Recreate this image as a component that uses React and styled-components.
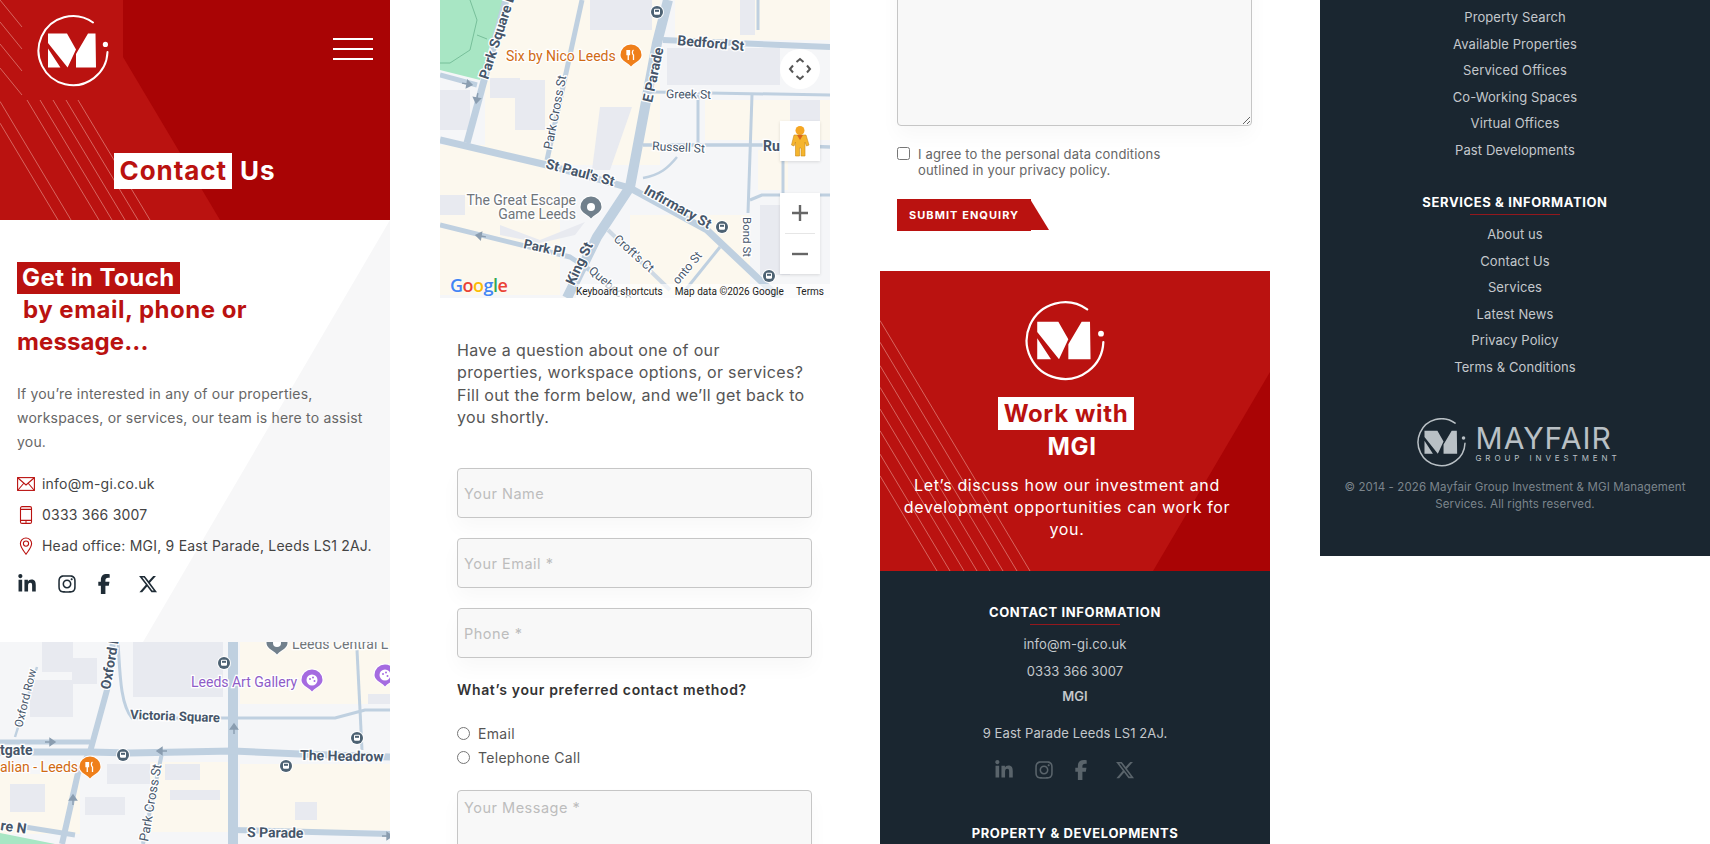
import React from 'react'
import styled, { createGlobalStyle } from 'styled-components'
import { FaLinkedinIn, FaInstagram, FaFacebookF, FaXTwitter } from 'react-icons/fa6'

const RED = '#ba1210'
const DARK_RED = '#a90405'
const NAVY = '#1a2630'

const GlobalStyle = createGlobalStyle`
  html, body {
    margin: 0;
    background: #fff;
    overflow: hidden;
  }
  * {
    box-sizing: border-box;
  }
  body {
    font-family: Inter, "Liberation Sans", sans-serif;
  }
`

const Page = styled.div`
  display: grid;
  grid-template-columns: repeat(4, 390px);
  column-gap: 50px;
  width: 1710px;
  height: 844px;
  overflow: hidden;
`

const Column = styled.div`
  display: flex;
  flex-direction: column;
  height: 844px;
  overflow: hidden;
`

/* red banners */
const Hero = styled.header`
  position: relative;
  height: 220px;
  flex: none;
  background: ${RED};
  overflow: hidden;

  &::before {
    content: '';
    position: absolute;
    inset: 0;
    background: ${DARK_RED};
    clip-path: polygon(123px 0, 390px 0, 390px 220px, 220px 220px, 123px 57px);
  }
`

const HeroRow = styled.div`
  position: relative;
  display: flex;
  justify-content: space-between;
  padding: 15px 17px 0 37px;
`

const Burger = styled.div`
  display: flex;
  flex-direction: column;
  gap: 8px;
  width: 40px;
  margin-top: 23px;

  span {
    display: block;
    height: 2px;
    background: #fff;
  }
`

const HeroTitle = styled.h1`
  position: relative;
  margin: 66px 0 0;
  text-align: center;
  font-size: 26px;
  line-height: 36px;
  font-weight: 700;
  letter-spacing: 0.95px;
  color: #fff;

  mark {
    display: inline-block;
    background: #fff;
    color: ${RED};
    padding: 0 5px;
    margin-right: 8px;
  }
`

const Hatch = styled.svg`
  position: absolute;
  left: 0;
  bottom: 0;
`

/* first column */
const Touch = styled.section`
  position: relative;
  height: 422px;
  flex: none;
  padding: 42px 17px 0;

  &::before {
    content: '';
    position: absolute;
    inset: 0;
    background: #f7f7f8;
    clip-path: polygon(390px 0, 143px 422px, 390px 422px);
  }

  > * {
    position: relative;
  }
`

const TouchTitle = styled.h2`
  margin: 0;
  font-size: 24px;
  line-height: 32px;
  font-weight: 700;
  letter-spacing: 0.5px;
  color: ${RED};

  mark {
    display: inline-block;
    background: ${RED};
    color: #fff;
    padding: 0 5px;
  }

  span {
    display: block;
    padding-left: 6px;
  }

  em {
    display: block;
    font-style: normal;
    letter-spacing: 0.1px;
  }
`

const Lead = styled.p`
  margin: 24px 0 0;
  font-size: 14px;
  line-height: 24px;
  letter-spacing: 0.2px;
  color: #666;
`

const ContactList = styled.ul`
  list-style: none;
  margin: 14px 0 0;
  padding: 0;
`

const ContactItem = styled.li`
  display: flex;
  align-items: center;
  gap: 7px;
  height: 31px;
  font-size: 14px;
  letter-spacing: 0.22px;
  color: #444;
  white-space: nowrap;

  svg {
    flex: none;
    width: 18px;
    height: 18px;
    color: ${RED};
  }
`

const Socials = styled.div`
  display: flex;
  justify-content: ${p => (p.$center ? 'center' : 'flex-start')};
  margin-top: ${p => (p.$center ? '-3px' : '10px')};
  padding-right: ${p => (p.$center ? '22px' : '0')};
  color: ${p => (p.$center ? '#5a646b' : '#1f2c36')};
  height: 26px;
  align-items: center;
  font-size: 20px;

  svg {
    display: block;
  }

  a:nth-child(1) { width: 40px; }
  a:nth-child(2) { width: 37px; }
  a:nth-child(3) { width: 44px; }
  a:nth-child(4) { width: 20px; }
`

/* map */
const MapBox = styled.div`
  position: relative;
  width: 390px;
  height: ${p => p.$height}px;
  flex: none;
  overflow: hidden;
  background: #f5f6f8;

  svg.map {
    display: block;
  }
`

const MapRound = styled.div`
  position: absolute;
  left: 340px;
  top: 49px;
  width: 40px;
  height: 40px;
  border-radius: 50%;
  background: #fff;
  display: grid;
  place-items: center;
`

const MapButton = styled.div`
  position: absolute;
  left: 340px;
  top: ${p => p.$top}px;
  width: 40px;
  height: ${p => p.$height}px;
  background: #fff;
  box-shadow: 0 1px 3px rgba(0, 0, 0, 0.12);
  display: flex;
  flex-direction: column;
  align-items: center;
  justify-content: center;
`

const ZoomRule = styled.div`
  width: 30px;
  height: 1px;
  margin: 11px 0;
  background: #e6e6e6;
`

const GoogleMark = styled.div`
  position: absolute;
  left: 10px;
  bottom: 2px;
  font-family: "Open Sans", Roboto, sans-serif;
  font-size: 18px;
  font-weight: 600;
  line-height: 22px;
  letter-spacing: -0.5px;
  text-shadow: 0 0 2px #fff;
`

const Letter = styled.span`
  color: ${p => p.$color};
`

const Attribution = styled.div`
  position: absolute;
  right: 0;
  bottom: 0;
  width: 254px;
  height: 14px;
  display: flex;
  justify-content: space-between;
  padding: 1px 6px 0 0;
  background: rgba(255, 255, 255, 0.65);
  font-family: Roboto, sans-serif;
  font-size: 10px;
  line-height: 14px;
  color: #222;
  white-space: nowrap;
`

/* form */
const Intro = styled.p`
  margin: 41px 0 0 17px;
  font-size: 16px;
  line-height: 22.3px;
  letter-spacing: 0.34px;
  color: #555;
  white-space: nowrap;
`

const Form = styled.form`
  display: flex;
  flex-direction: column;
  padding: 0 17px;
  margin-top: ${p => p.$top || 0}px;
`

const Field = styled.input`
  display: block;
  width: 355px;
  height: 50px;
  margin-bottom: 20px;
  padding: 0 6px;
  background: #f8f8f8;
  border: 1px solid #c6c6c6;
  border-radius: 4px;
  box-shadow: 0 10px 20px rgba(0, 0, 0, 0.03);
  font: inherit;
  font-size: 14.5px;
  letter-spacing: 0.5px;

  &::placeholder {
    color: #bdbdbd;
    opacity: 1;
  }
`

const Area = styled.textarea`
  display: block;
  width: 355px;
  height: 200px;
  margin-top: ${p => p.$shift || 0}px;
  padding: 8px 6px;
  background: #f8f8f8;
  border: 1px solid #c6c6c6;
  border-radius: 4px;
  box-shadow: 0 10px 20px rgba(0, 0, 0, 0.03);
  font: inherit;
  font-size: 14.5px;
  letter-spacing: 0.5px;
  flex: none;

  &::placeholder {
    color: #bdbdbd;
    opacity: 1;
  }
`

const Question = styled.div`
  margin-top: 2px;
  font-size: 14px;
  line-height: 20px;
  font-weight: 600;
  letter-spacing: 0.65px;
  color: #333;
`

const Options = styled.div`
  margin: 21px 0 21px;
`

const Option = styled.label`
  display: flex;
  align-items: center;
  gap: 8px;
  height: 24px;
  font-size: 14px;
  letter-spacing: 0.3px;
  color: #555;

  input {
    width: 13px;
    height: 13px;
    margin: 0;
  }
`

const Agree = styled.label`
  display: flex;
  gap: 8px;
  margin-top: 20px;
  font-size: 13px;
  line-height: 16px;
  letter-spacing: 0.17px;
  color: #666;

  input {
    flex: none;
    width: 13px;
    height: 13px;
    margin: 1px 0 0;
  }
`

const Submit = styled.button`
  position: relative;
  align-self: flex-start;
  width: 134px;
  height: 32px;
  margin-top: 21px;
  padding: 0 0 0 12px;
  border: 0;
  background: ${RED};
  color: #fff;
  font: inherit;
  font-size: 11px;
  font-weight: 700;
  letter-spacing: 1.05px;
  text-align: left;

  &::after {
    content: '';
    position: absolute;
    top: 0;
    left: 133px;
    width: 19px;
    height: 31px;
    background: ${RED};
    clip-path: polygon(0 0, 100% 100%, 0 100%);
  }
`

/* work with us */
const WorkCard = styled.section`
  position: relative;
  height: 300px;
  flex: none;
  margin-top: 40px;
  background: ${RED};
  color: #fff;
  text-align: center;
  overflow: hidden;
  padding-top: 30px;

  &::before {
    content: '';
    position: absolute;
    inset: 0;
    background: ${DARK_RED};
    clip-path: polygon(390px 101px, 390px 300px, 273px 300px);
  }

  > * {
    position: relative;
  }

  > ${Hatch} {
    position: absolute;
  }
`

const WorkLogo = styled.div`
  margin-left: 145px;
`

const WorkTitle = styled.h2`
  margin: 16px 0 0;
  font-size: 24px;
  line-height: 33px;
  font-weight: 700;
  letter-spacing: 0.65px;

  mark {
    display: inline-block;
    background: #fff;
    color: ${RED};
    padding: 0 6px;
    margin-right: 18px;
  }

  span {
    display: block;
    padding-right: 6px;
  }
`

const WorkText = styled.p`
  margin: 11px 28px 0 12px;
  font-size: 16px;
  line-height: 22px;
  letter-spacing: 0.63px;
`

/* footer blocks */
const FooterBlock = styled.section`
  flex: ${p => (p.$height ? 'none' : 1)};
  height: ${p => (p.$height ? `${p.$height}px` : 'auto')};
  background: ${NAVY};
  color: #c4c8cc;
  text-align: center;
  font-size: 13px;
  padding-top: ${p => p.$top}px;
`

const FootHead = styled.h3`
  margin: ${p => p.$gap || 0}px 0 0;
  font-size: 13px;
  line-height: 20px;
  font-weight: 700;
  letter-spacing: 0.62px;
  color: #fff;
  text-transform: uppercase;

  &::after {
    content: '';
    display: block;
    width: 90px;
    height: 1px;
    margin: 2px auto 0;
    background: #93181d;
  }
`

const FootLine = styled.div`
  height: ${p => p.$height || 26.5}px;
  line-height: ${p => p.$height || 26.5}px;
  letter-spacing: 0.1px;
  font-weight: ${p => (p.$bold ? 600 : 400)};
`

const FootLinks = styled.div`
  margin-top: ${p => p.$top || 0}px;
`

const BrandRow = styled.div`
  display: flex;
  justify-content: center;
  align-items: center;
  gap: 10px;
  margin-top: 38px;
  padding-left: 7px;
  color: #b9c0c5;
`

const BrandName = styled.div`
  text-align: left;
  font-size: 30px;
  line-height: 30px;
  font-weight: 400;
  letter-spacing: 1.05px;

  small {
    display: block;
    font-size: 8px;
    line-height: 10px;
    letter-spacing: 3.9px;
    white-space: nowrap;
  }
`

const Copyright = styled.p`
  margin: 12px 20px 0;
  font-size: 11.5px;
  line-height: 17px;
  letter-spacing: 0.12px;
  color: #7c858c;
`

/* drawings */
const LogoSvg = styled.svg`
  flex: none;
  display: block;
`

const Logo = ({ size, color = '#fff', weight = 2 }) => (
  <LogoSvg width={size} height={size} viewBox="0 0 72 72">
    <path d="M56 7.500A34.500 34.500 0 1 0 70.500 37" fill="none" stroke={color} strokeWidth={weight} strokeLinecap="round" />
    <path d="M11 18.600H30L39 34.500 30.600 52.500 11 28Z M11 33.500 23.400 52.500H11Z M58.500 18.600H51L39 39V52.500H59Z" fill={color} />
    <circle cx="68.400" cy="29.400" r="2.600" fill={color} />
  </LogoSvg>
)

const Lines = ({ width, height }) => {
  const ends = [57, 70, 84, 97, 110, 123, 137, 150]
  return (
    <Hatch width={width} height={height}>
      {ends.map(end => (
        <line key={end} x1={0} y1={height - end * 1.67} x2={end} y2={height} stroke="#f1b2a8" strokeWidth="0.7" opacity="0.75" />
      ))}
    </Hatch>
  )
}

const HeroLines = () => {
  const long = [27, 40, 53, 66, 78]
  const stubs = [0, 22, 44, 68]
  return (
    <Hatch width={160} height={220}>
      {[58, 71].map(end => (
        <line key={end} x1={0} y1={220 - end * 1.67} x2={end} y2={220} stroke="#f1b2a8" strokeWidth="0.7" opacity="0.75" />
      ))}
      {long.map(x => (
        <line key={x} x1={x} y1={100} x2={x + 72} y2={220} stroke="#f1b2a8" strokeWidth="0.7" opacity="0.75" />
      ))}
      {stubs.map(y => (
        <line key={y} x1={0} y1={y} x2={22} y2={y + 27} stroke="#f1b2a8" strokeWidth="0.7" opacity="0.75" />
      ))}
    </Hatch>
  )
}

const MailIcon = () => (
  <svg viewBox="0 0 18 18" fill="none" stroke="currentColor" strokeWidth="1.1">
    <rect x="0.6" y="2.6" width="16.8" height="12.8" />
    <path d="M1 3l8 7 8-7M1 15l6-7M17 15l-6-7" />
  </svg>
)

const PhoneIcon = () => (
  <svg viewBox="0 0 18 18" fill="none" stroke="currentColor" strokeWidth="1.1">
    <rect x="3.5" y="0.6" width="11" height="16.8" rx="1.5" />
    <path d="M3.5 3.4h11M3.5 14.4h11M8 16h2" />
  </svg>
)

const PinIcon = () => (
  <svg viewBox="0 0 18 18" fill="none" stroke="currentColor" strokeWidth="1.1">
    <path d="M9 17.2C6 13 3.4 10.4 3.4 6.6a5.6 5.6 0 0 1 11.2 0C14.6 10.4 12 13 9 17.2Z" />
    <circle cx="9" cy="6.6" r="2.6" />
  </svg>
)

const SocialLinks = ({ center }) => (
  <Socials $center={center}>
    <a><FaLinkedinIn /></a>
    <a><FaInstagram /></a>
    <a><FaFacebookF /></a>
    <a><FaXTwitter /></a>
  </Socials>
)

const Bus = ({ x, y }) => (
  <g transform={`translate(${x} ${y})`}>
    <circle r="7" fill="#fff" opacity="0.9" />
    <circle r="6" fill="#4d6273" />
    <rect x="-3" y="-3.2" width="6" height="6" rx="1.2" fill="#fff" />
    <rect x="-2" y="-2.2" width="4" height="2" fill="#4d6273" />
  </g>
)

const Pin = ({ x, y, color, children }) => (
  <g transform={`translate(${x} ${y})`}>
    <path d="M-11.5 0a11.5 11.5 0 1 1 23 0c0 5-5 7.5-9 10l-2.5 3-2.500-3c-4-2.500-9-5-9-10Z" fill="#fff" />
    <path d="M-10.500 0a10.500 10.500 0 1 1 21 0c0 4.500-5 7-8.500 9.500L0 11.500-2 9.500C-5.500 7-10.500 4.500-10.500 0Z" fill={color} />
    {children}
  </g>
)

const Fork = () => (
  <path d="M-4 -5v4.500h2.500V-5M-2.750 -5v10M2.500 -5c-1.500 1-1.500 4 0 5v5" fill="none" stroke="#fff" strokeWidth="1.3" />
)

const Palette = () => (
  <>
    <circle r="5.500" fill="#fff" />
    <circle cx="-2" cy="-1" r="1" fill="#a56be0" />
    <circle cx="1" cy="-2.500" r="1" fill="#a56be0" />
    <circle cx="2.500" cy="1" r="1" fill="#a56be0" />
  </>
)

const Arrow = ({ x, y, angle }) => (
  <path transform={`translate(${x} ${y}) rotate(${angle})`} d="M-5 0H3M0-3.500 5 0 0 3.500Z" fill="#8a9db0" stroke="#8a9db0" strokeWidth="1.4" />
)

const Road = ({ d, w, c = '#bfd0e0' }) => (
  <path d={d} fill="none" stroke={c} strokeWidth={w} strokeLinejoin="round" />
)

const MapLabel = ({ x, y, angle = 0, size = 12.5, bold, color = '#46566a', anchor, children }) => (
  <text
    x={x}
    y={y}
    transform={angle ? `rotate(${angle} ${x} ${y})` : undefined}
    fontFamily="Roboto, sans-serif"
    fontSize={size}
    fontWeight={bold ? 700 : 400}
    fill={color}
    textAnchor={anchor}
    stroke="#fff"
    strokeWidth={2.5}
    paintOrder="stroke"
  >
    {children}
  </text>
)

const Block = ({ b, c }) => <rect x={b[0]} y={b[1]} width={b[2]} height={b[3]} fill={c} />

const BEIGE = '#fcf8ee'
const BUILDING = '#e8eaf0'

const lowerBeige = [[240, 0, 150, 62], [240, 122, 150, 66], [0, 132, 80, 60], [150, 120, 80, 70]]
const lowerGrey = [[133, 0, 90, 55], [30, 38, 43, 37], [72, 16, 25, 26], [42, 0, 31, 30], [107, 122, 43, 20], [165, 122, 35, 16], [295, 160, 22, 18], [10, 142, 35, 28], [85, 155, 40, 18], [170, 148, 50, 10], [368, 52, 22, 10]]

const LowerMap = () => (
  <MapBox $height={202}>
    <svg className="map" width="390" height="202" viewBox="0 0 390 202">
      {lowerBeige.map(b => <Block key={b.join()} b={b} c={BEIGE} />)}
      {lowerGrey.map(b => <Block key={b.join()} b={b} c={BUILDING} />)}
      <path d="M0 191 55 202H0Z" fill="#a8e6c4" />
      <Road d="M233 0V202" w={10} />
      <Road d="M0 110H90L130 111 233 109 300 112 390 115" w={7} />
      <Road d="M0 100H90" w={5} />
      <Road d="M113 0 107 48 90 110 78 131 62 202" w={6} />
      <Road d="M37 25 15 95" w={2.5} />
      <Road d="M162 111 143 202" w={4} />
      <Road d="M118 0C120 30 120 62 132 76H335L365 68H390" w={3} />
      <Road d="M357 8 362 108" w={3} />
      <Road d="M232 188 390 192" w={6} />
      <Road d="M25 185 75 193" w={5} />
      <Arrow x={50} y={100} angle={0} />
      <Arrow x={162} y={109} angle={180} />
      <Arrow x={234} y={87} angle={-90} />
      <Arrow x={73} y={158} angle={-90} />
      <Arrow x={387} y={194} angle={0} />
      <MapLabel x={292} y={7} size={14} color="#70757a">Leeds Central L</MapLabel>
      <MapLabel x={191} y={45} size={14} color="#8e5cc7">Leeds Art Gallery</MapLabel>
      <MapLabel x={130} y={77} angle={2} size={13} bold>Victoria Square</MapLabel>
      <MapLabel x={300} y={118} angle={1} size={14} bold>The Headrow</MapLabel>
      <MapLabel x={0} y={113} size={14} bold>tgate</MapLabel>
      <MapLabel x={0} y={130} size={14} color="#d06a14">alian - Leeds</MapLabel>
      <MapLabel x={247} y={195} angle={1} size={14} bold>S Parade</MapLabel>
      <MapLabel x={0} y={188} angle={8} size={14} bold>re N</MapLabel>
      <MapLabel x={110} y={48} angle={-80} size={14} bold>Oxford Pl</MapLabel>
      <MapLabel x={22} y={86} angle={-76} size={11.5}>Oxford Row</MapLabel>
      <MapLabel x={148} y={200} angle={-80} size={13}>Park Cross St</MapLabel>
      <Bus x={224} y={21} />
      <Bus x={123} y={113} />
      <Bus x={357} y={96} />
      <Bus x={286} y={124} />
      <Pin x={312} y={38} color="#a56be0"><Palette /></Pin>
      <Pin x={385} y={33} color="#a56be0"><Palette /></Pin>
      <Pin x={90} y={125} color="#ef7f1a"><Fork /></Pin>
      <Pin x={277} y={1} color="#71808c"><circle r="4" fill="#fff" /></Pin>
    </svg>
  </MapBox>
)

const upperBeige = [[45, 0, 175, 165], [0, 145, 120, 150], [235, 0, 155, 40], [265, 100, 125, 40], [190, 215, 120, 80], [318, 150, 30, 40]]
const upperGrey = [[227, 48, 113, 37], [50, 78, 30, 20], [75, 80, 30, 50], [0, 90, 30, 40], [0, 195, 25, 20], [350, 100, 30, 25], [320, 205, 30, 70], [300, 0, 15, 35], [150, 0, 62, 30]]

const UpperMap = () => (
  <MapBox $height={298}>
    <svg className="map" width="390" height="298" viewBox="0 0 390 298">
      {upperBeige.map(b => <Block key={b.join()} b={b} c={BEIGE} />)}
      {upperGrey.map(b => <Block key={b.join()} b={b} c={BUILDING} />)}
      <path d="M160 107H192L170 170H152Z" fill={BUILDING} />
      <path d="M60 225 100 240 145 222 135 235 100 243 60 235Z" fill={BUILDING} />
      <path d="M0 0H64L40 80 0 70Z" fill="#a8e6c4" />
      <path d="M30 0 37 20 30 50 10 63H0M37 35 47 39" fill="none" stroke="#6bb58f" strokeWidth="0.8" />
      <Road d="M66 0 27 143" w={7} />
      <Road d="M0 75 37 85" w={5} />
      <Road d="M142 0 107 160" w={5} />
      <Road d="M0 140 107 165 190 188 267 230 323 283 340 298" w={7} />
      <Road d="M228 0 217 43 190 187 157 237 127 298" w={10} />
      <Road d="M223 40 390 47" w={6} />
      <Road d="M213 92 390 95" w={3} />
      <Road d="M203 145H330L390 147" w={3.5} />
      <Road d="M258 95V145" w={3} />
      <Road d="M312 95 308 213" w={3} />
      <Road d="M318 0V30" w={3} />
      <Road d="M203 178C220 175 228 168 237 157" w={2.5} />
      <Road d="M0 225 130 257 150 270" w={5} />
      <Road d="M168 230 230 290" w={4} c="#ced9e4" />
      <Road d="M243 293 280 247" w={3} />
      <Road d="M343 160V195M310 200 322 195H390" w={3} />
      <Arrow x={27} y={84} angle={10} />
      <Arrow x={37} y={98} angle={100} />
      <Arrow x={41} y={236} angle={190} />
      <MapLabel x={48} y={80} angle={-72} size={14} bold>Park Square E</MapLabel>
      <MapLabel x={66} y={61} size={14} color="#d06a14">Six by Nico Leeds</MapLabel>
      <MapLabel x={237} y={45} angle={5} size={14} bold>Bedford St</MapLabel>
      <MapLabel x={212} y={103} angle={-78} size={14} bold>E Parade</MapLabel>
      <MapLabel x={226} y={98} angle={1} size={12}>Greek St</MapLabel>
      <MapLabel x={112} y={150} angle={-79} size={12.5}>Park Cross St</MapLabel>
      <MapLabel x={212} y={150} angle={3} size={12}>Russell St</MapLabel>
      <MapLabel x={323} y={151} size={14} bold>Ru</MapLabel>
      <MapLabel x={105} y={168} angle={15} size={14} bold>St Paul's St</MapLabel>
      <MapLabel x={203} y={193} angle={29} size={14} bold>Infirmary St</MapLabel>
      <MapLabel x={136} y={205} size={14} color="#70757a" anchor="end">The Great Escape</MapLabel>
      <MapLabel x={136} y={219} size={14} color="#70757a" anchor="end">Game Leeds</MapLabel>
      <MapLabel x={83} y={248} angle={12} size={13} bold>Park Pl</MapLabel>
      <MapLabel x={134} y={286} angle={-65} size={14} bold>King St</MapLabel>
      <MapLabel x={173} y={240} angle={42} size={12}>Croft's Ct</MapLabel>
      <MapLabel x={148} y={272} angle={40} size={12}>Quebec St</MapLabel>
      <MapLabel x={238} y={285} angle={-50} size={12}>onto St</MapLabel>
      <MapLabel x={303} y={217} angle={90} size={11.5}>Bond St</MapLabel>
      <Bus x={217} y={12} />
      <Bus x={282} y={227} />
      <Bus x={329} y={276} />
      <Pin x={191} y={55} color="#ef7f1a"><Fork /></Pin>
      <Pin x={151} y={207} color="#71808c"><circle r="4" fill="#fff" /></Pin>
    </svg>
    <MapRound>
      <svg width="24" height="24" viewBox="0 0 24 24" fill="none" stroke="#555" strokeWidth="2">
        <path d="M8.500 5 12 2l3.500 3M8.500 19 12 22l3.500-3M5 8.500 2 12l3 3.500M19 8.500l3 3.500-3 3.500" />
      </svg>
    </MapRound>
    <MapButton $top={121} $height={40}>
      <svg width="20" height="32" viewBox="0 0 20 32">
        <circle cx="10" cy="5.500" r="4.500" fill="#f5a623" />
        <path d="M4 10h12l3 10-2.500 1-1.500-4v14h-4V23H9.500v8h-4V17L4 21l-2.500-1Z" fill="#f5b52e" stroke="#c98a1a" strokeWidth="0.6" />
        <path d="M7 10 10 15 13 10Z" fill="#d9661c" />
      </svg>
    </MapButton>
    <MapButton $top={193} $height={81}>
      <svg width="18" height="18" viewBox="0 0 18 18"><path d="M9 1v16M1 9h16" stroke="#666" strokeWidth="2.400" /></svg>
      <ZoomRule />
      <svg width="18" height="18" viewBox="0 0 18 18"><path d="M1 9h16" stroke="#666" strokeWidth="2.400" /></svg>
    </MapButton>
    <GoogleMark>
      <Letter $color="#4285f4">G</Letter>
      <Letter $color="#ea4335">o</Letter>
      <Letter $color="#fbbc05">o</Letter>
      <Letter $color="#4285f4">g</Letter>
      <Letter $color="#34a853">l</Letter>
      <Letter $color="#ea4335">e</Letter>
    </GoogleMark>
    <Attribution>
      <span>Keyboard shortcuts</span>
      <span>Map data ©2026 Google</span>
      <span>Terms</span>
    </Attribution>
  </MapBox>
)

const App = () => (
  <>
    <GlobalStyle />
    <Page>
      <Column>
        <Hero>
          <HeroLines />
          <HeroRow>
            <Logo size={72} />
            <Burger><span /><span /><span /></Burger>
          </HeroRow>
          <HeroTitle><mark>Contact</mark>Us</HeroTitle>
        </Hero>
        <Touch>
          <TouchTitle>
            <mark>Get in Touch</mark>
            <span>by email, phone or</span>
            <em>message...</em>
          </TouchTitle>
          <Lead>If you’re interested in any of our properties, workspaces, or services, our team is here to assist you.</Lead>
          <ContactList>
            <ContactItem><MailIcon />info@m-gi.co.uk</ContactItem>
            <ContactItem><PhoneIcon />0333 366 3007</ContactItem>
            <ContactItem><PinIcon />Head office: MGI, 9 East Parade, Leeds LS1 2AJ.</ContactItem>
          </ContactList>
          <SocialLinks />
        </Touch>
        <LowerMap />
      </Column>

      <Column>
        <UpperMap />
        <Intro>
          Have a question about one of our<br />
          properties, workspace options, or services?<br />
          Fill out the form below, and we’ll get back to<br />
          you shortly.
        </Intro>
        <Form $top={40}>
          <Field placeholder="Your Name" />
          <Field placeholder="Your Email *" />
          <Field placeholder="Phone *" />
          <Question>What’s your preferred contact method?</Question>
          <Options>
            <Option><input type="radio" name="method" />Email</Option>
            <Option><input type="radio" name="method" />Telephone Call</Option>
          </Options>
          <Area placeholder="Your Message *" />
        </Form>
      </Column>

      <Column>
        <Form>
          <Area $shift={-74} />
          <Agree>
            <input type="checkbox" />
            <span>I agree to the personal data conditions<br />outlined in your privacy policy.</span>
          </Agree>
          <Submit type="button">SUBMIT ENQUIRY</Submit>
        </Form>
        <WorkCard>
          <Lines width={160} height={300} />
          <WorkLogo><Logo size={80} /></WorkLogo>
          <WorkTitle><mark>Work with</mark><span>MGI</span></WorkTitle>
          <WorkText>Let’s discuss how our investment and development opportunities can work for you.</WorkText>
        </WorkCard>
        <FooterBlock $top={31}>
          <FootHead>Contact Information</FootHead>
          <FootLinks $top={6}>
            <FootLine $height={27}>info@m-gi.co.uk</FootLine>
            <FootLine $height={27}>0333 366 3007</FootLine>
            <FootLine $height={22} $bold>MGI</FootLine>
            <FootLine $height={53}>9 East Parade Leeds LS1 2AJ.</FootLine>
          </FootLinks>
          <SocialLinks center />
          <FootHead $gap={40}>Property &amp; Developments</FootHead>
        </FooterBlock>
      </Column>

      <Column>
        <FooterBlock $top={4} $height={556}>
          {['Property Search', 'Available Properties', 'Serviced Offices', 'Co-Working Spaces', 'Virtual Offices', 'Past Developments'].map(t => (
            <FootLine key={t}>{t}</FootLine>
          ))}
          <FootHead $gap={29}>Services &amp; Information</FootHead>
          <FootLinks $top={6}>
            {['About us', 'Contact Us', 'Services', 'Latest News', 'Privacy Policy', 'Terms & Conditions'].map(t => (
              <FootLine key={t}>{t}</FootLine>
            ))}
          </FootLinks>
          <BrandRow>
            <Logo size={49} color="#b9c0c5" weight={2.2} />
            <BrandName>
              MAYFAIR
              <small>GROUP INVESTMENT</small>
            </BrandName>
          </BrandRow>
          <Copyright>© 2014 - 2026 Mayfair Group Investment &amp; MGI Management Services. All rights reserved.</Copyright>
        </FooterBlock>
      </Column>
    </Page>
  </>
)

export default App
